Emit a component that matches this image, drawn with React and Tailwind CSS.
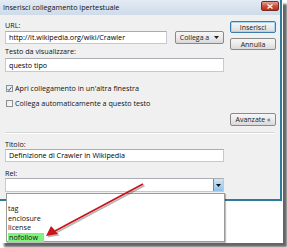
import React from 'react';

const font = { fontFamily: '"Open Sans", "Noto Sans", sans-serif' };

function Button({ children, primary, className = '' }) {
  return (
    <div
      className={`flex items-center justify-center rounded-[2px] border text-[7px] leading-none text-[#1a1a1a] bg-gradient-to-b from-[#f6f6f6] via-[#ebebeb] to-[#d9d9d9] ${
        primary ? 'border-[#3d7bad] shadow-[inset_0_0_0_1px_#a8d6f2]' : 'border-[#8a8a8a]'
      } ${className}`}
    >
      {children}
    </div>
  );
}

function Input({ value, className = '' }) {
  return (
    <div
      className={`flex items-center bg-white border border-[#c5cad2] border-t-[#abadb3] pl-[3px] text-[7.2px] text-black whitespace-nowrap overflow-hidden ${className}`}
    >
      {value}
    </div>
  );
}

function Checkbox({ checked, label }) {
  return (
    <div className="flex items-center h-[9px] gap-[2px] text-[7.2px] text-[#111]">
      <div className="w-[7px] h-[7px] border border-[#8e8f8f] bg-gradient-to-br from-[#e6e6e6] to-white flex items-center justify-center">
        {checked && (
          <svg width="6" height="6" viewBox="0 0 6 6">
            <path d="M0.8 3.2 L2.4 4.8 L5.3 0.9" fill="none" stroke="#2a4f9c" strokeWidth="1.2" />
          </svg>
        )}
      </div>
      <span>{label}</span>
    </div>
  );
}

function Label({ children, className = '' }) {
  return <div className={`h-[9px] leading-[9px] text-[7.2px] text-[#111] ${className}`}>{children}</div>;
}

export default function App() {
  const options = ['', 'tag', 'enclosure', 'license', 'nofollow'];

  return (
    <div className="w-[287px] h-[248px] bg-white overflow-hidden" style={font}>
      <div className="relative w-[283px] h-[243px] bg-white shadow-[4px_4px_2px_rgba(0,0,0,0.6)]">
        <div className="w-[282px] h-[201px] flex flex-col bg-[#f0f0f0] border-r-2 border-b-2 border-[#2f7a9a]">
          {/* title bar */}
          <div className="h-[15px] flex items-center justify-between pl-[3px] pr-[1px] bg-gradient-to-b from-[#e3ebf4] to-[#cfdbe8]">
            <span className="text-[7.2px] text-[#111] leading-none">Inserisci collegamento ipertestuale</span>
            <div className="w-[18px] h-[10px] mb-[3px] rounded-[2px] border border-[#7a2a20] bg-gradient-to-b from-[#e8a393] via-[#c9503a] to-[#b8311d] flex items-center justify-center">
              <svg width="6" height="5" viewBox="0 0 6 5">
                <path d="M0.5 0.5 L5.5 4.5 M5.5 0.5 L0.5 4.5" stroke="white" strokeWidth="1.3" />
              </svg>
            </div>
          </div>

          {/* body */}
          <div className="flex-1 flex flex-col pl-[5px]">
            <div className="h-[117px] flex gap-[6px]">
              <div className="w-[219px] flex flex-col">
                <Label className="mt-[6px]">URL:</Label>
                <div className="flex items-center mt-[1px] gap-[8px]">
                  <Input value="http://it.wikipedia.org/wiki/Crawler" className="w-[162px] h-[13px]" />
                  <Button className="w-[49px] h-[13px] gap-[5px]">
                    <span>Collega a</span>
                    <svg width="5" height="3" viewBox="0 0 5 3">
                      <path d="M0 0 H5 L2.5 3 Z" fill="#222" />
                    </svg>
                  </Button>
                </div>
                <Label className="mt-[3px]">Testo da visualizzare:</Label>
                <Input value="questo tipo" className="w-[219px] h-[14px] mt-[2px]" />
                <div className="mt-[12px] flex flex-col gap-[6px] pl-[1px]">
                  <Checkbox checked label="Apri collegamento in un'altra finestra" />
                  <Checkbox label="Collega automaticamente a questo testo" />
                </div>
              </div>
              <div className="w-[46px] flex flex-col pt-[6px] pb-[6px] gap-[5px]">
                <Button primary className="h-[12px]">Inserisci</Button>
                <Button className="h-[12px]">Annulla</Button>
                <Button className="h-[13px] mt-auto">Avanzate «</Button>
              </div>
            </div>
            <div className="w-[269px] h-[2px] border-t border-[#d5d5d5] border-b border-b-white" />
            <div className="w-[219px] flex flex-col">
              <Label className="mt-[6px]">Titolo:</Label>
              <Input value="Definizione di Crawler in Wikipedia" className="w-[219px] h-[13px]" />
              <Label className="mt-[7px]">Rel:</Label>
              <div className="w-[219px] h-[14px] flex bg-white border border-[#c5cad2] border-t-[#abadb3]">
                <div className="flex-1" />
                <div className="w-[10px] h-full border-l border-[#5b8fbf] bg-gradient-to-b from-[#cfe6f8] to-[#8fc1e8] flex items-center justify-center">
                  <svg width="5" height="3" viewBox="0 0 5 3">
                    <path d="M0 0 H5 L2.5 3 Z" fill="#111" />
                  </svg>
                </div>
              </div>
            </div>
          </div>
        </div>

        {/* open select list */}
        <div className="absolute left-[6px] top-[193px] w-[219px] h-[49px] bg-white border border-[#9a9a9a] shadow-[1px_1px_1px_rgba(0,0,0,0.25)] pt-[1px]">
          {options.map((o) => (
            <div key={o || 'blank'} className="h-[9.4px] leading-[9.4px] text-[7.2px] text-[#111] pl-[1px]">
              {o === 'nofollow' ? <span className="bg-[#7ef27e] px-[1px] inline-block pr-[6px]">{o}</span> : o}
            </div>
          ))}
        </div>

        {/* red arrow */}
        <svg className="absolute left-0 top-0" width="283" height="243" viewBox="0 0 283 243">
          <g transform="translate(1.5,1.5)" opacity="0.35">
            <path d="M143 184 L55 231" stroke="#333" strokeWidth="1.8" fill="none" />
            <path d="M46 236 L51 226 L58 234 Z" fill="#333" />
          </g>
          <path d="M143 184 L55 231" stroke="#c8151b" strokeWidth="1.8" fill="none" />
          <path d="M46 236 L51 226 L58 234 Z" fill="#c8151b" />
        </svg>
      </div>
    </div>
  );
}
